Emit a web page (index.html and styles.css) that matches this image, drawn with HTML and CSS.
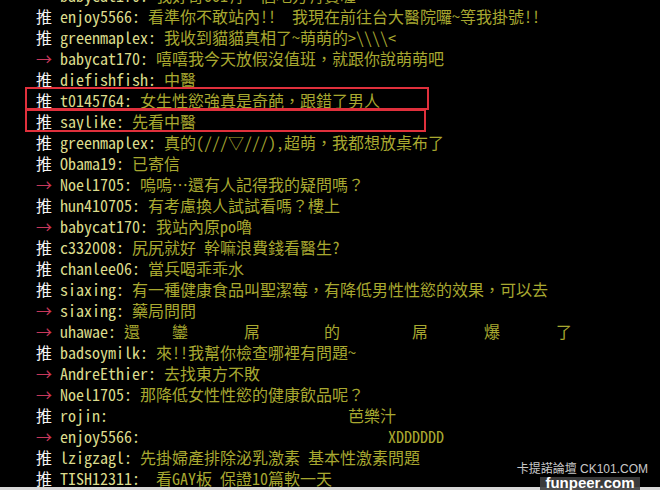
FILE: index.html
```html
<!DOCTYPE html>
<html lang="zh-TW">
<head>
    <meta charset="UTF-8">
    <title>推文</title>
    <link rel="stylesheet" href="styles.css">
</head>
<body>
    <div class="screen">
        <div class="comments">
            <div class="row"><span class="arrow">→</span> <span class="nick">babycat170:</span> <span class="msg">我好奇oo1有一個地方有賣喔</span></div>
            <div class="row"><span class="push">推</span> <span class="nick">enjoy5566:</span> <span class="msg">看準你不敢站內!!  我現在前往台大醫院囉~等我掛號!!</span></div>
            <div class="row"><span class="push">推</span> <span class="nick">greenmaplex:</span> <span class="msg">我收到貓貓真相了~萌萌的&gt;\\\\&lt;</span></div>
            <div class="row"><span class="arrow">→</span> <span class="nick">babycat170:</span> <span class="msg">嘻嘻我今天放假沒值班，就跟你說萌萌吧</span></div>
            <div class="row"><span class="push">推</span> <span class="nick">diefishfish:</span> <span class="msg">中醫</span></div>
            <div class="row"><span class="push">推</span> <span class="nick">t0145764:</span> <span class="msg">女生性慾強真是奇葩，跟錯了男人</span></div>
            <div class="row"><span class="push">推</span> <span class="nick">saylike:</span> <span class="msg">先看中醫</span></div>
            <div class="row"><span class="push">推</span> <span class="nick">greenmaplex:</span> <span class="msg">真的(///▽///),超萌，我都想放桌布了</span></div>
            <div class="row"><span class="push">推</span> <span class="nick">Obama19:</span> <span class="msg">已寄信</span></div>
            <div class="row"><span class="arrow">→</span> <span class="nick">Noel1705:</span> <span class="msg">嗚嗚…還有人記得我的疑問嗎？</span></div>
            <div class="row"><span class="push">推</span> <span class="nick">hun410705:</span> <span class="msg">有考慮換人試試看嗎？樓上</span></div>
            <div class="row"><span class="arrow">→</span> <span class="nick">babycat170:</span> <span class="msg">我站內原po嚕</span></div>
            <div class="row"><span class="push">推</span> <span class="nick">c332008:</span> <span class="msg">尻尻就好 幹嘛浪費錢看醫生?</span></div>
            <div class="row"><span class="push">推</span> <span class="nick">chanlee06:</span> <span class="msg">當兵喝乖乖水</span></div>
            <div class="row"><span class="push">推</span> <span class="nick">siaxing:</span> <span class="msg">有一種健康食品叫聖潔莓，有降低男性性慾的效果，可以去</span></div>
            <div class="row"><span class="arrow">→</span> <span class="nick">siaxing:</span> <span class="msg">藥局問問</span></div>
            <div class="row"><span class="arrow">→</span> <span class="nick">uhawae:</span> <span class="msg">還    鑾       屌        的         屌       爆       了</span></div>
            <div class="row"><span class="push">推</span> <span class="nick">badsoymilk:</span> <span class="msg">來!!我幫你檢查哪裡有問題~</span></div>
            <div class="row"><span class="arrow">→</span> <span class="nick">AndreEthier:</span> <span class="msg">去找東方不敗</span></div>
            <div class="row"><span class="arrow">→</span> <span class="nick">Noel1705:</span> <span class="msg">那降低女性性慾的健康飲品呢？</span></div>
            <div class="row"><span class="push">推</span> <span class="nick">rojin:</span> <span class="msg">                             芭樂汁</span></div>
            <div class="row"><span class="arrow">→</span> <span class="nick">enjoy5566:</span> <span class="msg">                              XDDDDDD</span></div>
            <div class="row"><span class="push">推</span> <span class="nick">lzigzagl:</span> <span class="msg">先掛婦產排除泌乳激素 基本性激素問題</span></div>
            <div class="row"><span class="push">推</span> <span class="nick">TISH12311:</span> <span class="msg"> 看GAY板 保證10篇軟一天</span></div>
        </div>

        <div class="mark mark-one"></div>
        <div class="mark mark-two"></div>
    </div>
    <div class="statusbar"></div>

    <div class="watermark">
        <div class="site">卡提諾論壇 CK101.COM</div>
        <div class="brand">funpeer.com</div>
    </div>
</body>
</html>
```

FILE: styles.css
```css
html, body {
    margin: 0;
    height: 100%;
}
body {
    background: #000;
    display: flex;
    flex-direction: column;
    overflow: hidden;
    position: relative;
}
.screen {
    flex: 1;
    position: relative;
    overflow: hidden;
}
.comments {
    margin-top: -15px;
    padding-left: 36px;
    font-family: "Noto Sans Mono CJK TC", "Noto Sans CJK TC", monospace;
    font-size: 16px;
}
.row {
    height: 21px;
    line-height: 21px;
    white-space: pre;
}
.push {
    color: #f4f4f4;
}
.arrow {
    color: #c8385a;
}
.nick {
    color: #dcdc8c;
}
.msg {
    color: #a8a830;
}
.mark {
    position: absolute;
    border: 2px solid #e0303c;
    box-sizing: border-box;
}
.mark-one {
    left: 25px;
    top: 87px;
    width: 404px;
    height: 23px;
}
.mark-two {
    left: 25px;
    top: 109px;
    width: 401px;
    height: 23px;
}
.statusbar {
    height: 3px;
    background: #d8d8d8;
}
.watermark {
    position: absolute;
    right: 0;
    bottom: 0;
    width: 150px;
    height: 30px;
}
.site {
    position: absolute;
    right: 12px;
    top: 2px;
    font-family: "Liberation Sans", Arial, "Noto Sans CJK TC", sans-serif;
    font-size: 12px;
    line-height: 14px;
    color: rgba(255, 255, 255, 0.8);
    white-space: nowrap;
}
.brand {
    position: absolute;
    right: 20px;
    bottom: 0;
    width: 100px;
    height: 13px;
    background: rgba(64, 64, 64, 0.9);
    color: #fff;
    font-family: "Liberation Sans", Arial, sans-serif;
    font-weight: bold;
    font-size: 15px;
    line-height: 12px;
    text-align: center;
}
```
